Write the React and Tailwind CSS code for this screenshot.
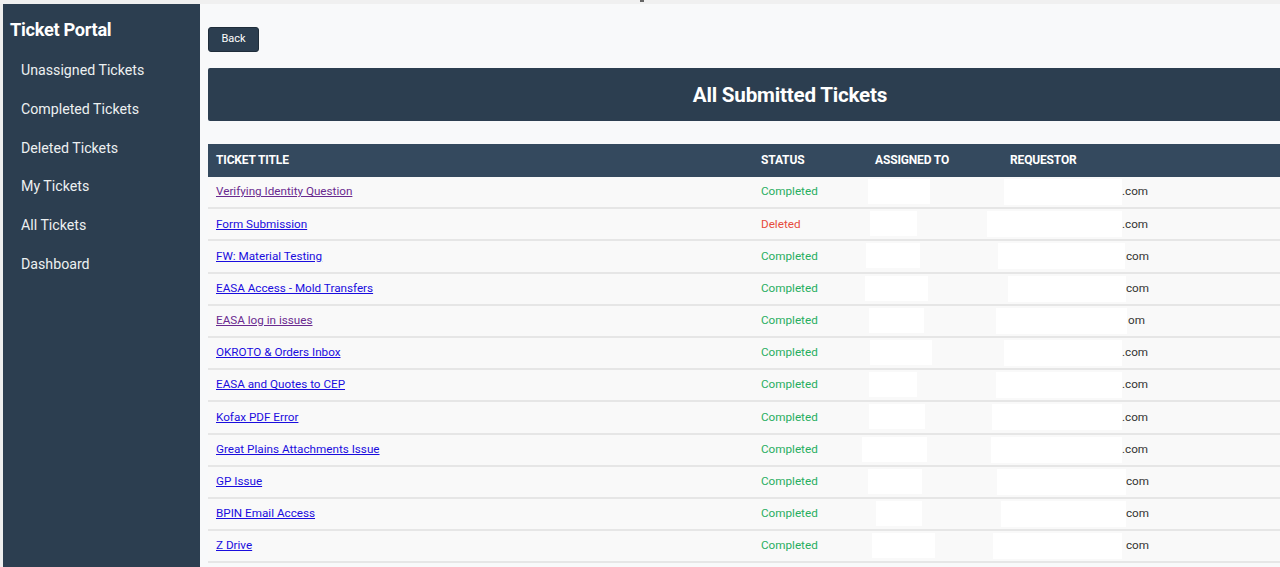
import React from "react";

const rows = [
  { t: "Verifying Identity Question", v: true, s: "Completed", a: [868, 62], r: [1004, 118], sfx: ".com", sx: 1122 },
  { t: "Form Submission", v: false, s: "Deleted", a: [870, 47], r: [987, 135], sfx: ".com", sx: 1122 },
  { t: "FW: Material Testing", v: false, s: "Completed", a: [866, 54], r: [998, 127], sfx: "com", sx: 1126 },
  { t: "EASA Access - Mold Transfers", v: false, s: "Completed", a: [865, 63], r: [1008, 118], sfx: "com", sx: 1126 },
  { t: "EASA log in issues", v: true, s: "Completed", a: [869, 55], r: [996, 131], sfx: "om", sx: 1128 },
  { t: "OKROTO & Orders Inbox", v: false, s: "Completed", a: [870, 62], r: [1004, 118], sfx: ".com", sx: 1122 },
  { t: "EASA and Quotes to CEP", v: false, s: "Completed", a: [869, 48], r: [996, 126], sfx: ".com", sx: 1122 },
  { t: "Kofax PDF Error", v: false, s: "Completed", a: [869, 56], r: [992, 130], sfx: ".com", sx: 1122 },
  { t: "Great Plains Attachments Issue", v: false, s: "Completed", a: [862, 65], r: [991, 131], sfx: ".com", sx: 1122 },
  { t: "GP Issue", v: false, s: "Completed", a: [868, 54], r: [997, 129], sfx: "com", sx: 1126 },
  { t: "BPIN Email Access", v: false, s: "Completed", a: [876, 46], r: [1001, 125], sfx: "com", sx: 1126 },
  { t: "Z Drive", v: false, s: "Completed", a: [872, 63], r: [993, 129], sfx: "com", sx: 1126 },
];

const nav = [
  "Unassigned Tickets",
  "Completed Tickets",
  "Deleted Tickets",
  "My Tickets",
  "All Tickets",
  "Dashboard",
];

export default function App() {
  const font = { fontFamily: "Roboto, 'Liberation Sans', sans-serif" };
  return (
    <div
      className="w-[1280px] h-[567px] overflow-hidden bg-[#eeeeee] flex flex-col relative"
      style={font}
    >
      <div className="h-[4px] shrink-0 bg-[#f0f0f0] relative">
        <div className="absolute left-[640px] top-0 w-[4px] h-[2px] bg-[#666]" />
      </div>
      <div className="flex flex-1 min-h-0 pl-[3px]">
        <aside className="w-[197px] shrink-0 bg-[#2c3e50] text-[#ecf0f1] pt-[14px]">
          <div className="pl-[7px] text-[18.2px] font-bold leading-[24px] text-white tracking-[-0.3px]">
            Ticket Portal
          </div>
          <ul className="mt-[9.5px]">
            {nav.map((n) => (
              <li key={n} className="pl-[18px] h-[38.75px] flex items-center text-[14.2px]">
                {n}
              </li>
            ))}
          </ul>
        </aside>
        <main className="w-[1180px] shrink-0 bg-[#f8f9fa] pl-[8px] pt-[23px]">
          <button className="w-[51px] h-[25px] rounded-[3px] bg-[#2c3e50] border border-[#1f2d3a] text-white text-[11px] flex items-center justify-center">
            Back
          </button>
          <div className="mt-[16px] h-[53px] w-[1164px] rounded-[2px] bg-[#2c3e50] flex items-center justify-center pt-[2px]">
            <h1 className="text-white text-[20.6px] font-bold tracking-[-0.2px]">All Submitted Tickets</h1>
          </div>
          <div className="mt-[23px] w-[1164px]">
            <div className="flex h-[33px] items-center bg-[#34495e] text-white text-[12px] font-bold uppercase tracking-[-0.15px] pb-[2px]">
              <div className="w-[545px] pl-[8px]">Ticket Title</div>
              <div className="w-[114px] pl-[8px]">Status</div>
              <div className="w-[135px] pl-[8px]">Assigned To</div>
              <div className="flex-1 pl-[8px]">Requestor</div>
            </div>
            {rows.map((r, i) => (
              <div
                key={i}
                className="relative flex h-[32.2px] items-center bg-[#f9f9f9] border-b-[2px] border-[#e6e6e6] text-[11.7px]"
              >
                <div className="w-[545px] pl-[8px]">
                  <a
                    href="#"
                    className={r.v ? "underline text-[#6a2a8f]" : "underline text-[#1a0dde]"}
                  >
                    {r.t}
                  </a>
                </div>
                <div
                  className={
                    r.s === "Deleted"
                      ? "w-[114px] pl-[8px] text-[#e74c3c]"
                      : "w-[114px] pl-[8px] text-[#27ae60]"
                  }
                >
                  {r.s}
                </div>
                <div className="w-[135px] pl-[8px]" />
                <div className="flex-1 text-[#333]" style={{ paddingLeft: r.sx - 1002 }}>
                  {r.sfx}
                </div>
                <div
                  className="absolute top-[2px] h-[25px] bg-white"
                  style={{ left: r.a[0] - 208, width: r.a[1] }}
                />
                <div
                  className="absolute top-[2px] h-[26px] bg-white"
                  style={{ left: r.r[0] - 208, width: r.r[1] }}
                />
              </div>
            ))}
          </div>
        </main>
      </div>
    </div>
  );
}
